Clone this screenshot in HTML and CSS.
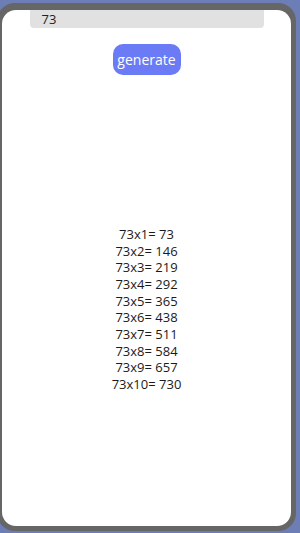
FILE: index.html
```html
<!DOCTYPE html>
<html>
<head>
<meta charset="utf-8">
<link rel="stylesheet" href="styles.css">
</head>
<body>
<div class="frame">
  <div class="screen">
    <div class="field">73</div>
    <button class="generate">generate</button>
    <div class="table">
      <div>73x1= 73</div>
      <div>73x2= 146</div>
      <div>73x3= 219</div>
      <div>73x4= 292</div>
      <div>73x5= 365</div>
      <div>73x6= 438</div>
      <div>73x7= 511</div>
      <div>73x8= 584</div>
      <div>73x9= 657</div>
      <div>73x10= 730</div>
    </div>
  </div>
</div>
</body>
</html>
```
FILE: styles.css
```css
html, body {
  margin: 0;
  padding: 0;
}
body {
  width: 300px;
  height: 533px;
  overflow: hidden;
  background: #6d7db6;
  padding-top: 3px;
  box-sizing: border-box;
  font-family: "Open Sans", "Noto Sans", sans-serif;
}
.frame {
  margin-left: -3px;
  width: 299px;
  height: 528px;
  box-sizing: border-box;
  background: #666666;
  border-radius: 18px;
  padding: 7px 5px 5px 5px;
}
.screen {
  height: 100%;
  background: #ffffff;
  border-radius: 14px;
  display: flex;
  flex-direction: column;
  align-items: center;
}
.field {
  width: 234px;
  height: 18px;
  box-sizing: border-box;
  background: #e1e1e1;
  border-radius: 0 0 4px 4px;
  padding-left: 12px;
  font-size: 13px;
  line-height: 18px;
  color: #222;
}
.generate {
  margin-top: 16px;
  width: 68px;
  height: 31px;
  border: none;
  border-radius: 10px;
  background: #6b7bf6;
  color: #ffffff;
  font-family: "Open Sans", "Noto Sans", sans-serif;
  font-size: 14px;
  padding: 0;
  line-height: 31px;
}
.table {
  margin-top: 151px;
  font-size: 13px;
  line-height: 16.67px;
  color: #1a1a1a;
  text-align: center;
}
```
